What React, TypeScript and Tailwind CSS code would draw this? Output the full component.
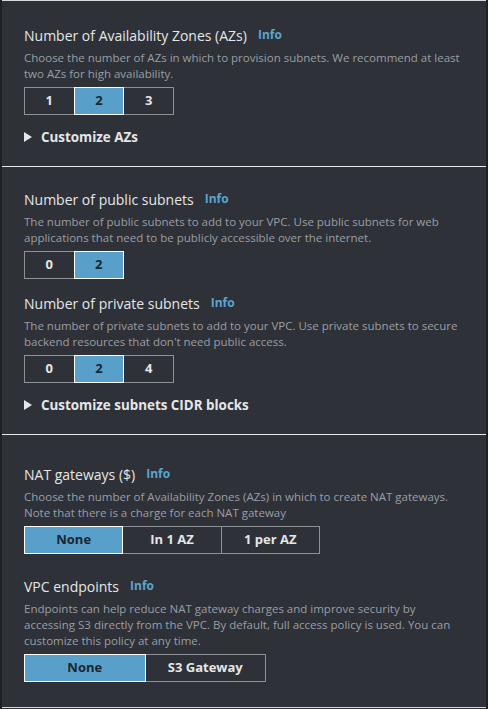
import React from 'react';

type Option = { label: string; selected?: boolean };

const Title = ({ children, className = '' }: { children: React.ReactNode; className?: string }) => (
  <div className={`flex items-center h-5 ${className}`}>
    <span className="text-[14px] text-[#e4e6e8]">{children}</span>
    <span className="ml-[11px] text-[12px] font-bold text-[#5ba4d0]">Info</span>
  </div>
);

const Desc = ({ children }: { children: React.ReactNode }) => (
  <p className="mt-[5px] text-[11.5px] leading-4 text-[#9a9ea4]">{children}</p>
);

const Segmented = ({ options, width }: { options: Option[]; width: string }) => (
  <div className={`mt-[5px] flex h-[28px] ${width}`}>
    {options.map((opt, i) => (
      <div
        key={opt.label}
        className={`flex flex-1 items-center justify-center text-[13px] font-bold ${
          opt.selected
            ? 'bg-[#58a0c9] text-[#1a2530] border border-white'
            : 'text-[#e4e6e8] border-y border-[#8d9196] ' +
              (i === 0 ? 'border-l ' : '') +
              (i === options.length - 1 ? 'border-r ' : '') +
              (i > 0 && !options[i - 1].selected ? 'border-l ' : '')
        }`}
      >
        {opt.label}
      </div>
    ))}
  </div>
);

const Expander = ({ label }: { label: string }) => (
  <div className="mt-3 flex items-center h-5">
    <svg width="8" height="10" viewBox="0 0 8 10" className="mr-[9px]">
      <path d="M0 0 L8 5 L0 10 Z" fill="#e4e6e8" />
    </svg>
    <span className="text-[13.4px] font-bold text-[#e4e6e8]">{label}</span>
  </div>
);

export default function App() {
  return (
    <div
      className="w-[488px] h-[709px] bg-[#1e2024] flex flex-col"
      style={{ fontFamily: '"Open Sans", "Noto Sans", sans-serif' }}
    >
      <div className="mx-[2px] flex-1 bg-[#2e3137] flex flex-col">
        <div className="h-px bg-[#d8d9db]" />
        <section className="px-[22px] pt-6 pb-[19px]">
          <Title>Number of Availability Zones (AZs)</Title>
          <Desc>
            Choose the number of AZs in which to provision subnets. We recommend at least two AZs for high
            availability.
          </Desc>
          <Segmented width="w-[150px]" options={[{ label: '1' }, { label: '2', selected: true }, { label: '3' }]} />
          <Expander label="Customize AZs" />
        </section>
        <div className="h-px bg-[#e8e9ea]" />
        <section className="px-[22px] pt-[22px] pb-[19px]">
          <Title>Number of public subnets</Title>
          <Desc>
            The number of public subnets to add to your VPC. Use public subnets for web applications that need to
            be publicly accessible over the internet.
          </Desc>
          <Segmented width="w-[100px]" options={[{ label: '0' }, { label: '2', selected: true }]} />
          <Title className="mt-[14px]">Number of private subnets</Title>
          <Desc>
            The number of private subnets to add to your VPC. Use private subnets to secure backend resources that
            don't need public access.
          </Desc>
          <Segmented width="w-[150px]" options={[{ label: '0' }, { label: '2', selected: true }, { label: '4' }]} />
          <Expander label="Customize subnets CIDR blocks" />
        </section>
        <div className="h-px bg-[#e8e9ea]" />
        <section className="px-[22px] pt-[29px] flex-1">
          <Title>NAT gateways ($)</Title>
          <Desc>
            Choose the number of Availability Zones (AZs) in which to create NAT gateways. Note that there is a
            charge for each NAT gateway
          </Desc>
          <Segmented
            width="w-[296px]"
            options={[{ label: 'None', selected: true }, { label: 'In 1 AZ' }, { label: '1 per AZ' }]}
          />
          <Title className="mt-[22px]">VPC endpoints</Title>
          <Desc>
            Endpoints can help reduce NAT gateway charges and improve security by accessing S3 directly from the
            VPC. By default, full access policy is used. You can customize this policy at any time.
          </Desc>
          <Segmented width="w-[242px]" options={[{ label: 'None', selected: true }, { label: 'S3 Gateway' }]} />
        </section>
        <div className="h-px bg-[#d8d9db] mb-px" />
      </div>
    </div>
  );
}
